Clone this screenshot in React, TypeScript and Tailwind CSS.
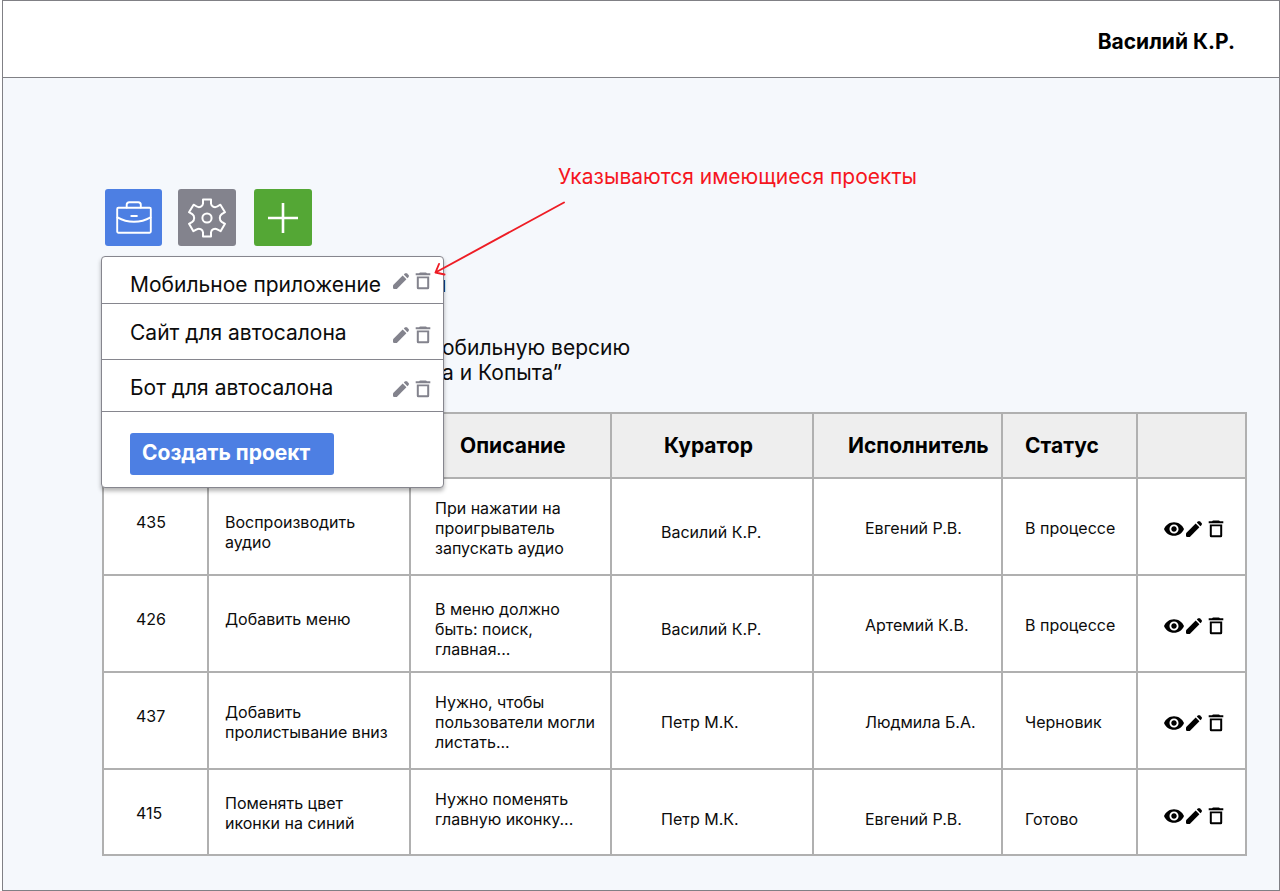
import React from "react";

type Task = {
  id: string;
  title: string;
  titlePad: string;
  description: string[];
  descriptionPad: string;
  curator: string;
  curatorPad: string;
  assignee: string;
  status: string;
  actionsPad: string;
};

const tasks: Task[] = [
  {
    id: "435",
    title: "Воспроизводить аудио",
    titlePad: "pt-[33px]",
    description: ["При нажатии на", "проигрыватель", "запускать аудио"],
    descriptionPad: "pt-[19px]",
    curator: "Василий К.Р.",
    curatorPad: "pt-[43px]",
    assignee: "Евгений Р.В.",
    status: "В процессе",
    actionsPad: "pt-10",
  },
  {
    id: "426",
    title: "Добавить меню",
    titlePad: "pt-[33px]",
    description: ["В меню должно", "быть: поиск,", "главная..."],
    descriptionPad: "pt-[23px]",
    curator: "Василий К.Р.",
    curatorPad: "pt-[43px]",
    assignee: "Артемий К.В.",
    status: "В процессе",
    actionsPad: "pt-10",
  },
  {
    id: "437",
    title: "Добавить пролистывание вниз",
    titlePad: "pt-[29px]",
    description: ["Нужно, чтобы", "пользователи могли", "листать..."],
    descriptionPad: "pt-[19px]",
    curator: "Петр М.К.",
    curatorPad: "pt-[39px]",
    assignee: "Людмила Б.А.",
    status: "Черновик",
    actionsPad: "pt-10",
  },
  {
    id: "415",
    title: "Поменять цвет иконки на синий",
    titlePad: "pt-[23px]",
    description: ["Нужно поменять", "главную иконку..."],
    descriptionPad: "pt-[19px]",
    curator: "Петр М.К.",
    curatorPad: "pt-[39px]",
    assignee: "Евгений Р.В.",
    status: "Готово",
    actionsPad: "pt-9",
  },
];

const projects = [
  { name: "Мобильное приложение", row: "h-[47px] pt-2.5", icons: "pb-2" },
  { name: "Сайт для автосалона", row: "h-14 pt-0.5", icons: "pt-1" },
  { name: "Бот для автосалона", row: "h-[52px] pt-1", icons: "pt-0.5" },
];

function PencilIcon() {
  return (
    <svg viewBox="0 0 18 18" className="size-[18px]" fill="currentColor" aria-hidden="true">
      <path d="M1 13.3 10.7 3.6 14.4 7.3 4.8 16.9H2.2Q1 16.9 1 15.7Z" />
      <path d="M11.8 2.6 13 1.4Q14 .6 15 1.4L16.6 3Q17.4 4 16.6 5L15.4 6.2Z" />
    </svg>
  );
}

function TrashIcon() {
  return (
    <svg viewBox="0 0 16 18" className="h-[18px] w-4" fill="currentColor" aria-hidden="true">
      <path d="M5 .5H11L12 1.3H15.3V3.2H.7V1.3H4Z" />
      <path fillRule="evenodd" d="M1.8 4.4H14.2V15.7Q14.2 17.2 12.7 17.2H3.3Q1.8 17.2 1.8 15.7ZM3.8 6.3V15.3H12.2V6.3Z" />
    </svg>
  );
}

function EyeIcon() {
  return (
    <svg viewBox="1 4 22 16" className="h-4 w-5" fill="currentColor" aria-hidden="true">
      <path d="M12 4.5C7 4.5 2.73 7.61 1 12c1.73 4.39 6 7.5 11 7.5s9.27-3.11 11-7.5c-1.73-4.39-6-7.5-11-7.5zM12 17c-2.76 0-5-2.24-5-5s2.24-5 5-5 5 2.24 5 5-2.24 5-5 5zm0-8c-1.66 0-3 1.34-3 3s1.34 3 3 3 3-1.34 3-3-1.34-3-3-3z" />
    </svg>
  );
}

function BriefcaseIcon() {
  return (
    <svg viewBox="0 0 36 34" className="h-[34px] w-9" fill="none" stroke="currentColor" strokeWidth="1.9" strokeLinecap="round" strokeLinejoin="round" aria-hidden="true">
      <rect x="1.2" y="6.8" width="33.6" height="25" rx="1.2" />
      <path d="M10.7 6.600V3.800Q10.700 1.200 13.300 1.200H22.200Q24.800 1.200 24.800 3.800V6.600" />
      <path d="M1.4 16.400Q9 20.800 18 20.800T34.600 16.400" />
      <path strokeWidth="2.2" d="M15.4 15H20.800" />
    </svg>
  );
}

function GearIcon() {
  return (
    <svg viewBox="0 0 40 40" className="size-10" fill="none" stroke="currentColor" strokeWidth="2" strokeLinejoin="round" aria-hidden="true">
      <path d="M16 1.5H24V5.7Q24.3 8 26.3 8.8 28.4 9.6 30.2 8.5L33.4 6.7 38 14.2 34.7 16.2Q32.8 17.5 32.8 20T34.7 23.8L38 25.8 33.6 33.2 30.2 31.4Q28.4 30.4 26.3 31.2 24.3 32.2 24 34.4V38.5H16V34.4Q15.7 32.2 13.7 31.2 11.6 30.4 9.8 31.4L6.4 33.2 2 25.8 5.3 23.8Q7.2 22.5 7.2 20T5.3 16.2L2 14.2 6.6 6.7 9.8 8.5Q11.6 9.6 13.7 8.8 15.7 8 16 5.7Z" />
      <circle cx="20" cy="20" r="4.6" />
    </svg>
  );
}

function PlusIcon() {
  return (
    <svg viewBox="0 0 30 30" className="size-[30px]" fill="none" stroke="currentColor" strokeWidth="2.6" aria-hidden="true">
      <path d="M15 0V30M0 15H30" />
    </svg>
  );
}

function ProjectMenu() {
  return (
    <div className="absolute top-[67px] -left-1 z-10 w-[343px] rounded border border-[#86868e] bg-white shadow-[0_3px_4px_rgba(0,0,0,0.3)]">
      <ul>
        {projects.map((project) => (
          <li key={project.name} className={`flex items-center justify-between border-b border-[#86868e] pr-3 pl-7 ${project.row}`}>
            <a href="#project" className="text-[21px] leading-6 whitespace-nowrap">{project.name}</a>
            <span className={`flex items-center gap-[5px] text-[#83838d] ${project.icons}`}>
              <button type="button" aria-label={`Изменить: ${project.name}`}><PencilIcon /></button>
              <button type="button" aria-label={`Удалить: ${project.name}`}><TrashIcon /></button>
            </span>
          </li>
        ))}
      </ul>
      <div className="px-7 pt-[21px] pb-3">
        <button type="button" className="h-[42px] w-[204px] rounded-[3px] bg-[#4d7fe3] px-3 pb-0.5 text-left text-[21px] leading-6 font-bold text-white">
          Создать проект
        </button>
      </div>
    </div>
  );
}

const headCell = "border-2 border-[#b0b0b0] text-left text-[21px] leading-6 font-bold text-black";
const cell = "border-2 border-[#b0b0b0] align-top";

export default function App() {
  return (
    <div className="ml-0.5 flex min-h-screen flex-col border border-[#808085] bg-[#f5f8fc] font-[Inter,'Noto_Sans',sans-serif] text-[#0c0c0c]">
      <header className="flex h-[77px] items-center justify-end border-b border-[#808085] bg-white pt-1.5 pr-11">
        <span className="text-[21px] leading-6 font-bold text-black">Василий К.Р.</span>
      </header>

      <main className="flex-1 pt-[87px] pr-8 pb-8 pl-[99px]">
        <div className="relative ml-[3px] flex items-start pt-6">
          <div className="relative flex h-[57px] pr-8">
            <button type="button" aria-label="Проекты" className="flex h-[57px] w-[57px] items-center justify-center rounded-[3px] bg-[#4d7fe3] text-white"><BriefcaseIcon /></button>
            <button type="button" aria-label="Настройки" className="ml-4 flex h-[57px] w-[58px] items-center justify-center rounded-[3px] bg-[#83838d] text-white"><GearIcon /></button>
            <button type="button" aria-label="Добавить" className="ml-[18px] flex h-[57px] w-[58px] items-center justify-center rounded-[3px] bg-[#54a735] text-white"><PlusIcon /></button>
            <ProjectMenu />
          </div>
          <p className="absolute top-0 left-[453px] text-[21px] leading-6 whitespace-nowrap text-[#f5161e]">Указываются имеющиеся проекты</p>
          <svg viewBox="0 0 134 76" className="absolute top-9 left-[328px] z-20 h-[76px] w-[134px]" fill="none" stroke="#ee1d25" strokeWidth="1.9" strokeLinecap="round" strokeLinejoin="round" aria-hidden="true">
            <path d="M131 1.500 2.500 71.500M6 63 2.500 71.500 11.500 73.500" />
          </svg>
        </div>

        <section className="pt-[27px] pl-[332px]">
          <h1 className="text-[21px] leading-6">и</h1>
          <p className="mt-[38px] pl-2 text-[21px] leading-[25px]">
            обильную версию
            <br />а и Копыта”
          </p>
        </section>

        <table className="mt-[27px] w-full table-fixed border-collapse bg-white text-base leading-5">
          <colgroup>
            <col className="w-[105px]" />
            <col className="w-[202px]" />
            <col className="w-[201px]" />
            <col className="w-[202px]" />
            <col className="w-[189px]" />
            <col className="w-[135px]" />
            <col className="w-[109px]" />
          </colgroup>
          <thead>
            <tr className="h-[65px] bg-[#eeeeee]">
              <th className={headCell} aria-label="Номер" />
              <th className={headCell} aria-label="Название" />
              <th className={`${headCell} pl-[49px]`}>Описание</th>
              <th className={`${headCell} pl-[52px]`}>Куратор</th>
              <th className={`${headCell} pl-[34px]`}>Исполнитель</th>
              <th className={`${headCell} pl-[22px]`}>Статус</th>
              <th className={headCell} aria-label="Действия" />
            </tr>
          </thead>
          <tbody>
            {tasks.map((task) => (
              <tr key={task.id} className="h-[97px] last:h-[86px]">
                <td className={`${cell} pt-[33px] pl-8`}>{task.id}</td>
                <td className={`${cell} pr-2 pl-4 ${task.titlePad}`}>{task.title}</td>
                <td className={`${cell} pl-6 whitespace-nowrap ${task.descriptionPad}`}>
                  {task.description.map((line) => (
                    <div key={line}>{line}</div>
                  ))}
                </td>
                <td className={`${cell} pl-[49px] ${task.curatorPad}`}>{task.curator}</td>
                <td className={`${cell} pt-[39px] pl-[51px]`}>{task.assignee}</td>
                <td className={`${cell} pt-[39px] pl-[22px]`}>{task.status}</td>
                <td className={`${cell} pl-[26px] ${task.actionsPad}`}>
                  <div className="flex h-5 items-center text-black">
                    <button type="button" aria-label={`Просмотр ${task.id}`}><EyeIcon /></button>
                    <button type="button" className="ml-px" aria-label={`Изменить ${task.id}`}><PencilIcon /></button>
                    <button type="button" className="ml-[5px]" aria-label={`Удалить ${task.id}`}><TrashIcon /></button>
                  </div>
                </td>
              </tr>
            ))}
          </tbody>
        </table>
      </main>
    </div>
  );
}
